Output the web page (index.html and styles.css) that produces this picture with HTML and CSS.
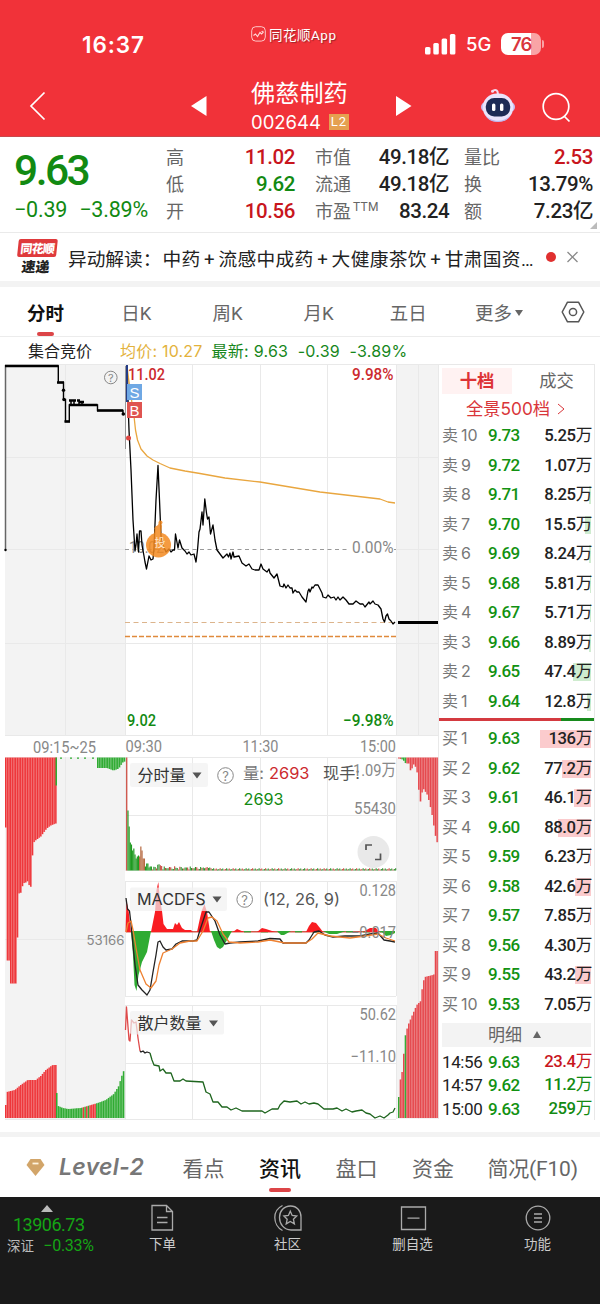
FILE: index.html
```
<!DOCTYPE html>
<html lang="zh-CN">
<head>
  <meta charset="UTF-8" />
  <title>佛慈制药 002644</title>
  <meta name="viewport" content="width=device-width, initial-scale=1.0" />
  <link rel="stylesheet" href="styles.css">
</head>
<body>
  <header class="top">
    <div class="status">
      <div class="time">16:37</div>
      <div class="app">
        <svg width="15" height="16" viewBox="0 0 15 16" fill="none" stroke="#ffd9d9"><rect x=".7" y=".7" width="13.6" height="14.4" rx="4" stroke-width=".9"/><path d="M2.500 9.500l2-1.500 2 2.500 2.500-4 1.500 1.500 2-2M10.500 5.500l2-.3" stroke-width="1.1"/></svg>
        <span>同花顺App</span>
      </div>
      <div class="signal">
        <svg width="31" height="21" viewBox="0 0 31 21" fill="#fff"><rect x="0" y="13" width="5.5" height="7.5" rx="1.5"/><rect x="8.3" y="9" width="5.5" height="11.5" rx="1.5"/><rect x="16.6" y="4.5" width="5.5" height="16" rx="1.5"/><rect x="24.9" y="0" width="5.5" height="20.500" rx="1.5"/></svg>
        <span class="net">5G</span>
        <span class="battery">76</span><i class="cap"></i>
      </div>
    </div>
    <nav class="nav">
      <svg class="back" width="17" height="32" viewBox="0 0 17 32" fill="none" stroke="#fff" stroke-width="1.700"><path d="M15.500 3.500L2 17l13.500 13.500"/></svg>
      <svg class="prev" width="16" height="20" viewBox="0 0 16 20" fill="#fff"><path d="M0 10L15.500 0v20z"/></svg>
      <div class="stock">
        <h1>佛慈制药</h1>
        <div class="code">002644 <b>L2</b></div>
      </div>
      <svg class="next" width="16" height="20" viewBox="0 0 16 20" fill="#fff"><path d="M15.500 10L0 0v20z"/></svg>
      <svg class="robot" width="34" height="36" viewBox="0 0 34 36"><path d="M11.500 3.500c1.500-2 4-2 5 0l.5 3" fill="none" stroke="#f3d9ee" stroke-width="2"/><circle cx="11.500" cy="3.300" r="1.500" fill="#f3d9ee"/><rect x="0" y="14" width="34" height="10" rx="5" fill="#c6c1f4"/><rect x="1.800" y="5.500" width="30.400" height="28" rx="14" fill="#eae4fb"/><path d="M4 26c5 9 21 9 26 0-2 5-6 8-13 8S6 31 4 26z" fill="#bdb5ef"/><rect x="4.800" y="10" width="24.400" height="18.500" rx="8.500" fill="#1d2b55"/><rect x="11" y="15.500" width="3.400" height="7.500" rx="1.600" fill="#fff"/><rect x="19" y="15.500" width="3.400" height="7.500" rx="1.600" fill="#fff"/></svg>
      <svg class="search" width="30" height="32" viewBox="0 0 30 32" fill="none" stroke="#fff" stroke-width="1.700"><circle cx="14" cy="14.500" r="12.800"/><path d="M22.500 24.500l5 5"/></svg>
    </nav>
  </header>

  <section class="quote">
    <div class="price">
      <strong>9.63</strong>
      <div><span>−0.39</span><span>−3.89%</span></div>
    </div>
    <dl>
      <dt>高</dt><dd class="red">11.02</dd>
      <dt>低</dt><dd class="green">9.62</dd>
      <dt>开</dt><dd class="red">10.56</dd>
    </dl>
    <dl>
      <dt>市值</dt><dd>49.18亿</dd>
      <dt>流通</dt><dd>49.18亿</dd>
      <dt>市盈<sup>TTM</sup></dt><dd>83.24</dd>
    </dl>
    <dl>
      <dt>量比</dt><dd class="red">2.53</dd>
      <dt>换</dt><dd>13.79%</dd>
      <dt>额</dt><dd>7.23亿</dd>
    </dl>
  </section>

  <section class="news">
    <div class="news-logo"><b>同花顺</b><i>速递</i></div>
    <p>异动解读：<span>中药<i>+</i>流感中成药<i>+</i>大健康茶饮<i>+</i>甘肃国资…</span></p>
    <i class="dot"></i>
    <svg width="11" height="12" viewBox="0 0 11 12" stroke="#8a8a8a" stroke-width="1.300"><path d="M.5 1l10 10M10.500 1l-10 10"/></svg>
  </section>

  <nav class="periods">
    <a class="on">分时</a><a>日K</a><a>周K</a><a>月K</a><a>五日</a><a class="more">更多<i></i></a>
    <svg width="24" height="22" viewBox="0 0 24 22" fill="none" stroke="#555" stroke-width="1.500"><path d="M6.500 1.200h11L22.800 11l-5.300 9.800h-11L1.200 11z" stroke-linejoin="round"/><circle cx="12" cy="11" r="3.600"/></svg>
  </nav>

  <div class="legend">
    <span>集合竞价</span>
    <span class="avg">均价: 10.27</span>
    <span class="last">最新: 9.63&nbsp; -0.39&nbsp; -3.89%</span>
  </div>

  <main class="board">
    <svg class="chart" width="439" height="756" viewBox="0 364 439 756">
      <!-- auction panels -->
      <g fill="#f3f3f3">
        <rect x="5" y="364" width="120" height="371.500"/><rect x="397" y="364" width="42" height="371.500"/>
        <rect x="5" y="757" width="120" height="362"/><rect x="397" y="757" width="42" height="362"/>
      </g>
      <path class="grid" d="M5 364.500H439M5 457.500H439M5 549.500H125M396 549.500H439M5 643.500H439M5 735.500H439M125.500 364V735M192.500 364V735M260.500 364V735M327.500 364V735M396.500 364V735M65.500 364V735M418.500 364V735M438.500 364V1119"/>
      <path class="grid" d="M125 757.500H396M125 815.500H396M125 870.500H396M125 881.500H396M125 996.500H396M125 1005.500H396M125 1063.500H396M125 1119.500H396M5 939.500H125M397 939.500H439M5 1119.500H125M65.500 757V1119M418.500 757V1119M125.500 757V870M192.500 757V870M260.500 757V870M327.500 757V870M396.500 757V870M125.500 881V996M192.500 881V996M260.500 881V996M327.500 881V996M396.500 881V996M125.500 1005V1119M192.500 1005V1119M260.500 1005V1119M327.500 1005V1119M396.500 1005V1119"/>

      <!-- call auction price -->
      <path d="M5.500 365V550" stroke="#666" stroke-width="1.500"/><circle cx="5.500" cy="550" r="1.200"/>
      <path d="M5 366H58.300V382.500H63.500V399.500H65.500V421.500H69.300V405H97.500V410.500H123V414" fill="none" stroke="#000" stroke-width="1.400"/>
      <path d="M5 366H58.500M57 382.500H64M64.500 421.500H70M69 405H97.500M97 410.500H123M69 400.500H76M77 400.500H80M79 402H84" stroke="#000" stroke-width="2.500"/>
      <path d="M71 401v4M74 401v4M79 401v4M82 402v3" stroke="#000" stroke-width="1.500"/>
      <circle cx="63.500" cy="390.300" r="1.700"/><circle cx="64" cy="399.500" r="1.700"/><circle cx="123.300" cy="414" r="1.800"/>

      <!-- reference lines -->
      <path d="M125 549.500H350M394 549.500H396" stroke="#999" stroke-dasharray="4 3.500"/>
      <path d="M125 622.500H396" stroke="#dcb48c" stroke-dasharray="5 3.500"/>
      <path d="M125 636.500H396" stroke="#e08a3c" stroke-width="1.500" stroke-dasharray="5 2"/>
      <text x="129" y="553" textLength="35" class="num gray">10.02</text>

      <!-- intraday -->
      <path d="M125.500 366V449" stroke="#999"/>
      <polyline class="line" stroke="#e9a63f" points="127,366 130,390 134,416 135.500,430 137.500,440 141,449 147,456 153,460 160,463.500 170,468 185,471 200,473.500 225,478 260,482 290,487 320,492 350,495.500 380,499 388,502 395,503"/>
      <polyline class="line" stroke="#000" stroke-width="1.350" points="127,365 128,400 129,430 131,470 133,520 135,551 136,545 137,534 138.500,552 139.500,531 141,531 142,545 144,556 145,562 146.500,569 149,556 151,560 153,559 154,548 156,500 158,465.500 159.500,500 161,536 163,545 166,552 169,549 171,552 173,550 174.500,550 175.500,534 178,548 179.500,540 182,548 185,551 187,554 189,552 191,555 194,554 196,562 197.500,550 199,532 200,529 202,512 203,525 204.800,499 206.500,513 207.500,519 209,517 210.500,534 213,525 215,540 217,550 220,554 223,558 227,554 228.500,557 230,553 231,559 233,552 234,557 239,556 242,563 246,566 249,564 252,569 255,570 259,570 261,564 263,569 267,572 269,569 270,573 274,578 277,574 280,586 283,587 284,584 286,588 288,585 290,588 292,588 293,593 295,590 297,592 299,592 302,597 306,602 308,591 309,589 310,592 312,587 313,588 315,585 318,585 320,589 322,593 323,597 326,598 328,595 331,598 334,597 336,600 338,597 340,600 343,597 346,600 349,604 353,604 356,601 360,604 363,604 365,607 369,602 370,604 373,601 375,604 378,605 381,609 383,619 384.500,622 386,616 387.500,614 389,619 391,621 393,624 395,622"/>
      <path d="M127 365V402" stroke="#243c86" stroke-width="2"/>
      <path d="M398 622.500H438" stroke="#000" stroke-width="3"/>
      <circle cx="128.500" cy="438" r="2.500" fill="#df4440"/>
      <rect x="127" y="384" width="15" height="16" fill="#6fa8e4"/><rect x="127" y="402" width="15" height="16" fill="#df5450"/>
      <text x="134.500" y="397.500" class="badge">S</text><text x="134.500" y="415.500" class="badge">B</text>
      <g opacity=".85" fill="#f48a20"><circle cx="158.500" cy="545" r="12.500"/><path d="M154 534l1-7 3-2 2-5 2 6-1 8z"/><circle cx="160.500" cy="522.500" r="2"/><circle cx="156.500" cy="528.500" r="2"/></g>
      <text x="160" y="547" class="coin">投</text>

      <text x="128" y="380" textLength="37" class="num red">11.02</text>
      <text x="352" y="380" textLength="41.500" class="num red">9.98%</text>
      <text x="352" y="553" textLength="41.500" class="num gray">0.00%</text>
      <text x="127" y="725.500" textLength="29" class="num green">9.02</text>
      <text x="343" y="725.500" textLength="50.500" class="num green">−9.98%</text>
      <g class="help"><circle cx="110.800" cy="377.500" r="6.300"/><text x="110.800" y="381.500" class="mini">?</text></g>
      <text x="33" y="752.500" textLength="63" class="num gray">09:15~25</text>
      <text x="125.500" y="751.500" textLength="36.500" class="num gray">09:30</text>
      <text x="242.500" y="751.500" textLength="36" class="num gray">11:30</text>
      <text x="360" y="751.500" textLength="36" class="num gray">15:00</text>

      <!-- bars are filled in by script.js -->
      <g id="bars"></g>

      <!-- MACD lines -->
      <polyline class="line" stroke="#222" points="126,898 127.500,909 129.500,911 131,924 133,945 135,965 138,985 142,990 147,995 150,990 153,972 156,955 158,942 160,941 163,947 166,950 172,949 176,944 182,941 193,941 197,940 200,930 204,918 206,912 209,912 215,921 220,935 225,944 230,943 240,942 258,941 270,938.500 280,939 283,943 306,943 309,940 314,932 319,931 325,935 333,937 345,936 360,936 370,934 378,933 384,940 390,941 395,942"/>
      <polyline class="line" stroke="#ee8030" points="126,932 128,923 131,921 133,930 136,948 140,970 146,984 151,988 156,981 159,965 163,953 172,949 180,943 190,941 197,941 203,931 208,918 212,917 217,921 223,934 229,942 240,943 258,942 270,940 285,943 306,943 312,939 318,933 330,936 350,938 365,936 378,934 386,938 395,941"/>

      <!-- retail count -->
      <polyline class="line" stroke="#df4a4a" points="125.500,1030 126.500,1007 129,1040 130,1041 131.500,1020 134,1023 136,1022 138,1038 140,1051"/>
      <polyline class="line" stroke="#222" points="140,1051 141,1052 143,1051 145,1053 147,1052 150,1053"/>
      <polyline class="line" stroke="#1e651e" points="150,1053 152,1060 154,1065 159,1066 160,1071 163,1069 166,1073 171,1073 174,1081 180,1081 183,1079 186,1081 203,1082 206,1092 210,1094 213,1102 218,1102 222,1107 227,1107 231,1110 236,1108 242,1111 262,1111 265,1113 272,1109 278,1109 280,1105 284,1101 290,1102 297,1101 301,1104 305,1102 309,1104 314,1103 318,1104 324,1109 333,1109 337,1108 342,1111 346,1109 352,1112 356,1111 362,1110 366,1113 370,1114 375,1118 380,1116 384,1118 388,1115 390,1113 393,1112 395,1108"/>

      <g fill="#f1f1f1" fill-opacity=".7"><rect x="130" y="763" width="78" height="24" rx="2"/><rect x="130" y="887.500" width="97" height="23.500" rx="2"/><rect x="130" y="1011" width="94" height="23.500" rx="2"/></g>
      <text x="137.500" y="781" textLength="48" class="label">分时量</text>
      <text x="137" y="905" textLength="68.500" class="label">MACDFS</text>
      <text x="137.500" y="1029" textLength="64" class="label">散户数量</text>
      <path d="M192.500 772.500h9l-4.500 6zM212.500 896.500h9l-4.500 6zM209 1020.500h9l-4.500 6z" fill="#555"/>
      <g class="help"><circle cx="225.500" cy="775.500" r="7.800"/><text x="225.500" y="780.500">?</text><circle cx="244.700" cy="899.500" r="7.800"/><text x="244.700" y="904.500">?</text></g>
      <text x="243" y="779" textLength="21" class="label gray">量:</text><text x="269" y="779" textLength="40.500" class="wide red">2693</text>
      <text x="323" y="779" textLength="37" class="label mid">现手:</text>
      <text x="353" y="776" textLength="43" class="num gray">1.09万</text>
      <text x="243.500" y="804.500" textLength="40" class="wide green">2693</text>
      <text x="354" y="814" textLength="42" class="num gray">55430</text>
      <text x="263" y="905" textLength="77" class="wide">(12, 26, 9)</text>
      <text x="359.500" y="895.500" textLength="36.500" class="num gray">0.128</text>
      <text x="351" y="937.500" textLength="45" class="num gray">−0.017</text>
      <text x="86.500" y="945" textLength="38" class="small">53166</text>
      <text x="359.500" y="1019.500" textLength="36.500" class="num gray">50.62</text>
      <text x="350.500" y="1062" textLength="45.500" class="num gray">−11.10</text>
      <circle cx="373.500" cy="852" r="16" fill="#e9e9e9"/>
      <path d="M366 850v-5h6M375 859.500h5.500v-6" fill="none" stroke="#555" stroke-width="1.700"/>
    </svg>

    <aside class="book">
      <div class="book-tabs"><b>十档</b><span>成交</span></div>
      <div class="depth">全景500档 <svg width="8" height="12" viewBox="0 0 8 12" fill="none" stroke="#d9363a"><path d="M1 1l6 5-6 5"/></svg></div>
      <div class="rows" id="sell"></div>
      <div class="ratio"></div>
      <div class="rows" id="buy"></div>
      <div class="detail">明细 <i></i></div>
      <div class="ticks">
        <div><span>14:56</span><em>9.63</em><b class="red">23.4<s>万</s></b></div>
        <div><span>14:57</span><em>9.62</em><b class="green">11.2<s>万</s></b></div>
        <div><span>15:00</span><em>9.63</em><b class="green">259<s>万</s></b></div>
      </div>
    </aside>
  </main>

  <nav class="tabs">
    <svg width="19" height="19" viewBox="0 0 19 19"><path d="M4.500 1h10L18.500 7 9.500 18 .5 7z" fill="#d2a569"/><path d="M6.500 5.500h6" stroke="#fff4df" stroke-width="1.800"/></svg>
    <span class="level">Level-2</span><a>看点</a><a class="on">资讯</a><a>盘口</a><a>资金</a><a class="f10">简况(F10)</a>
  </nav>

  <footer class="bottom">
    <div class="index">
      <i></i>
      <strong>13906.73</strong>
      <div>深证 <span>−0.33%</span></div>
    </div>
    <a><svg width="28" height="30" viewBox="0 0 28 30"><path d="M3 2.500h14.500l6 6V27H3zM17.500 2.500v6h6M8 14.500h10.500M8 19.500h10.500"/></svg>下单</a>
    <a><svg width="28" height="30" viewBox="0 0 28 30"><path d="M5.500 14.500c0-6.500 4.500-11.500 11-11.500s10.500 5 10.500 11V27H17c-7 0-11.500-6-11.500-12.500zM8.500 2.500C3.500 5 .8 9.500 .8 14.500S3.500 25 8.500 27.500M16.300 8.200l1.900 4.300 4.500.5-3.300 3.200 1 4.700-4.100-2.400-4.100 2.400 1-4.700-3.300-3.200 4.500-.5z"/></svg>社区</a>
    <a><svg width="28" height="30" viewBox="0 0 28 30"><path d="M2.500 4h24v22.500h-24zM8.500 15.200h12"/></svg>删自选</a>
    <a><svg width="28" height="30" viewBox="0 0 28 30"><circle cx="14" cy="15" r="11.800"/><path d="M10 11h8M10 15h8M10 19h8"/></svg>功能</a>
  </footer>
  <script src="script.js"></script>
</body>
</html>
```
FILE: styles.css
```
* {
  box-sizing: border-box;
}

body {
  margin: 0;
  width: 600px;
  height: 1304px;
  overflow: hidden;
  background: #fff;
  color: #222;
  font-family: Roboto, "Noto Sans CJK SC", sans-serif;
}

i, em {
  font-style: normal;
}

s, u {
  text-decoration: none;
}

.red { color: #c8161d; fill: #cc2a2e; }
.green { color: #128a12; fill: #128a12; }

/* header */
.top {
  height: 137px;
  background: #f13239;
  color: #fff;
  border-bottom: 1px solid #c8484c;
}

.status {
  height: 68px;
  display: grid;
  grid-template-columns: 251px 174px 1fr;
}

.time {
  padding: 31px 0 0 82px;
  font: 600 22.500px/28px Inter, sans-serif;
  letter-spacing: 0.9px;
}

.app {
  display: flex;
  align-items: center;
  height: 20px;
  margin-top: 24px;
  gap: 3px;
  font-size: 13.500px;
  letter-spacing: 0.500px;
  text-shadow: 1px 1px 1px #9c2428;
}

.signal {
  display: flex;
  align-items: center;
  height: 24px;
  margin-top: 32px;
}

.net {
  margin: 0 10px 0 10px;
  font: 500 18.500px/24px Inter, sans-serif;
}

.battery {
  width: 40px;
  height: 22px;
  border-radius: 7px;
  background: linear-gradient(90deg, #fff 76%, #f9a4a6 76%);
  color: #d9363c;
  font: 600 18.500px/22px Inter, sans-serif;
  text-align: center;
  letter-spacing: -0.800px;
}

.cap {
  width: 2px;
  height: 8px;
  margin-left: 1px;
  border-radius: 0 2px 2px 0;
  background: #f9a4a6;
}

.nav {
  display: flex;
  height: 68px;
}

.back { margin: 21px 0 0 29px; }
.prev { margin: 28px 0 0 145px; }
.stock { width: 98px; margin-left: 44px; }
.next { margin: 28px 0 0 47px; }
.robot { margin: 20px 0 0 68.500px; }
.search { margin: 24px 0 0 27px; }

.stock h1 {
  margin: 9px 0 0;
  font: 400 24.200px/30px "Noto Sans CJK SC", sans-serif;
  white-space: nowrap;
}

.code {
  display: flex;
  align-items: center;
  margin-top: 3px;
  font: 400 18.500px/24px Inter, sans-serif;
  white-space: nowrap;
}

.code b {
  margin-left: 8px;
  width: 22px;
  background: #e5a050;
  font: 400 13px/16px Roboto, sans-serif;
  letter-spacing: 1px;
  text-align: center;
}

/* quote */
.quote {
  position: relative;
  display: flex;
  height: 96px;
  padding: 7px 7px 0 14px;
  border-bottom: 1px solid #eaeaea;
}

.quote::after {
  content: "";
  position: absolute;
  right: 3px;
  bottom: 3px;
  border: 0 solid transparent;
  border-left-width: 7px;
  border-bottom: 7px solid #bbb;
}

.price {
  flex: none;
  width: 152px;
  color: #128a12;
  white-space: nowrap;
}

.price strong {
  display: block;
  font-weight: 500;
  font-size: 42.500px;
  line-height: 54px;
  letter-spacing: -2.500px;
}

.price div {
  display: flex;
  justify-content: space-between;
  width: 134px;
  font-size: 21.500px;
  line-height: 24px;
  letter-spacing: -0.200px;
}

.quote dl {
  flex: none;
  display: grid;
  grid-template-columns: auto 1fr;
  grid-auto-rows: 27px;
  width: 129px;
  margin: 0 20px 0 0;
  font-size: 18px;
  line-height: 27px;
  white-space: nowrap;
}
.quote dl:nth-of-type(2) { padding-right: 6px; }

.quote dt { color: #666; }
.quote dd {
  margin: 0;
  font-weight: 500;
  font-size: 20.500px;
  letter-spacing: -0.400px;
  text-align: right;
}
.quote sup {
  font-size: 12px;
  letter-spacing: 0.300px;
  line-height: 1;
  margin-left: 2px;
}

/* news */
.news {
  display: flex;
  align-items: center;
  height: 54px;
  padding-left: 16px;
  border-bottom: 6px solid #f3f3f3;
}

.news-logo {
  width: 41px;
  display: flex;
  flex-direction: column;
  align-items: center;
  font-family: "Noto Sans CJK SC", sans-serif;
  font-weight: 900;
  transform: skewX(-6deg);
}

.news-logo b {
  width: 39px;
  height: 18px;
  border-radius: 2px;
  background: #df3a3c;
  color: #fff;
  font-size: 12px;
  line-height: 18px;
  text-align: center;
  letter-spacing: -0.800px;
}

.news-logo i {
  font-size: 14px;
  line-height: 18px;
}

.news p {
  margin: 0 0 0 11px;
  width: 472px;
  font-size: 18.700px;
  white-space: nowrap;
}

.news p span { margin-left: 1px; letter-spacing: 0.350px; }
.news p i { padding: 0 3.500px; }

.dot {
  width: 10px;
  height: 10px;
  border-radius: 50%;
  background: #e0302f;
  margin: 0 11px 0 6px;
}

/* period tabs */
.periods {
  display: flex;
  align-items: center;
  height: 50px;
  padding-left: 27px;
  border-bottom: 1px solid #ececec;
  font-size: 18.500px;
  color: #666;
}

.periods a { width: 91.200px; position: relative; white-space: nowrap; padding-left: 3px; }
.periods a.on { color: #111; font-weight: 600; padding-left: 0; }
.periods a:nth-child(5) { padding-left: 0; margin-left: -2px; }
.periods a.more { width: 86px; padding-left: 0; margin-left: -6px; }
.more i {
  display: inline-block;
  margin: 0 0 4px 3px;
  border: 5px solid transparent;
  border-width: 6px 4.500px 0;
  border-top-color: #666;
}

.on::after {
  content: "";
  position: absolute;
  left: 10px;
  bottom: -11px;
  width: 17px;
  height: 4px;
  border-radius: 2px;
  background: #dc4548;
}

.legend {
  display: flex;
  height: 27px;
  padding: 1px 0 0 28px;
  font: 400 16px/27px Inter, "Noto Sans CJK SC", sans-serif;
  white-space: nowrap;
}
.avg { margin-left: 28px; color: #e3b23c; letter-spacing: 0.200px; }
.last { margin-left: 9px; color: #17871c; letter-spacing: 0.250px; }

/* charts */
.board {
  display: flex;
  height: 756px;
}

.chart { flex: none; }
.grid { stroke: #e9e9e9; fill: none; }
.line { fill: none; stroke-width: 1.300; stroke-linejoin: round; }
.num { font: 500 16.500px Roboto, "Noto Sans CJK SC", sans-serif; }
.gray { fill: #888; font-weight: 400; }
.wide { font: 400 16px Inter, sans-serif; }
text.wide:not(.red):not(.green) { fill: #555; }
.label { font: 400 16px Inter, "Noto Sans CJK SC", sans-serif; fill: #333; }
.label.gray { fill: #777; }
.label.mid { fill: #555; }
.small { font: 400 13px Inter, sans-serif; fill: #888; }
.badge { font: 400 15px "Liberation Sans", sans-serif; fill: #fff; text-anchor: middle; }
.coin { font: 11px "Noto Sans CJK SC", sans-serif; fill: #ffe6c8; text-anchor: middle; }
.help circle { fill: none; stroke: #888; }
.help text { font-family: Inter, sans-serif; font-size: 13px; fill: #888; text-anchor: middle; }
.help .mini { font-size: 11px; }

/* order book */
.book {
  width: 156px;
  border-right: 1px solid #e8e8e8;
  border-top: 1px solid #e8e8e8;
}

.book-tabs {
  display: grid;
  grid-template-columns: 70px 1fr;
  height: 29px;
  padding: 3px 3px 0;
  font-size: 17.300px;
  line-height: 26px;
  text-align: center;
  color: #666;
}
.book-tabs b { background: #fff2f2; color: #dd3336; font-weight: 600; }
.book-tabs span { padding-left: 10px; }

.depth {
  height: 27px;
  padding-left: 27px;
  color: #d9363a;
  font: 400 17.300px/30px Inter, "Noto Sans CJK SC", sans-serif;
}
.depth svg { margin-left: 2px; }

.row, .ticks div {
  position: relative;
  display: grid;
  grid-template-columns: 46px 44px 1fr;
  height: 29.500px;
  line-height: 29.500px;
  padding: 0 2px 0 3px;
  white-space: nowrap;
}
.row span { color: #777; font-family: Inter, "Noto Sans CJK SC", sans-serif; font-size: 16px; letter-spacing: -0.200px; word-spacing: -1px; }
.row em, .ticks em { color: #129212; font-size: 17px; font-weight: 500; letter-spacing: -0.500px; }
.row b, .ticks b { position: relative; font-size: 16.700px; font-weight: 500; text-align: right; letter-spacing: -0.400px; }
.row s, .ticks s { font-weight: 400; }
.row u {
  position: absolute;
  right: 3px;
  top: 6px;
  height: 18px;
}
#sell u { background: #cfeccf; }
#buy u { background: #fbcbcd; }
#sell { height: 296.500px; }
#buy { height: 295px; }

.ratio {
  height: 3px;
  margin: 0 0 3.500px;
  background: linear-gradient(90deg, #d43a40 79%, #178a1c 79%);
}

.detail {
  height: 24px;
  margin: 4px 3px 3px;
  background: #f3f3f3;
  color: #666;
  font-size: 17px;
  line-height: 24px;
  padding-left: 46px;
}
.detail i {
  display: inline-block;
  margin: 0 0 3px 7px;
  border: solid transparent;
  border-width: 0 4.500px 7px;
  border-bottom-color: #666;
}
.ticks div { height: 23.300px; line-height: 24px; }
.ticks span { font-size: 17px; letter-spacing: -0.400px; }

/* content tabs */
.tabs {
  display: flex;
  align-items: center;
  height: 77px;
  padding: 17px 0 0 26px;
  background: linear-gradient(#fff 12px, #f3f3f3 12px, #f3f3f3 17px, #fff 17px);
  font-size: 21px;
  color: #666;
  white-space: nowrap;
}
.tabs a { position: relative; width: 76.500px; }
.tabs a.on { color: #111; font-weight: 500; }
.tabs a.on::after { width: 22px; left: 10px; bottom: -10px; }
.tabs a.f10 { width: auto; letter-spacing: -0.200px; margin-left: -1px; }
.level {
  width: 123.500px;
  margin-left: 14px;
  font: italic 600 23px Inter, sans-serif;
  letter-spacing: 0.300px;
  color: #777;
}

/* bottom bar */
.bottom {
  display: flex;
  height: 107px;
  background: #1a1a1a;
  color: #ccc;
  font-size: 13.500px;
}
.bottom a {
  display: flex;
  flex-direction: column;
  align-items: center;
  width: 125px;
  padding-top: 6px;
  line-height: 20px;
}
.bottom a svg { fill: none; stroke: #aaa; stroke-width: 1.300; margin-bottom: 1px; }
.index { width: 100px; padding-left: 7px; white-space: nowrap; color: #bbb; }
.index i {
  display: block;
  width: 0;
  margin: 8px 0 0 34px;
  border: solid transparent;
  border-width: 0 6px 7px;
  border-bottom-color: #bbb;
}
.index strong {
  display: block;
  padding: 3px 0 0 6px;
  color: #15a515;
  font-weight: 400;
  font-size: 18px;
  line-height: 20px;
  letter-spacing: -0.500px;
}
.index span { color: #15a515; font-size: 16px; margin-left: 6px; letter-spacing: -0.300px; }
.index div { line-height: 22px; }
```
FILE: script.js
```
const RED = '#ee3438';
const GREEN = '#2fab32';
const bars = document.getElementById('bars');

// squeeze the digits instead of the gaps between them
document.querySelectorAll('.chart text[textLength]').forEach(t => t.setAttribute('lengthAdjust', 'spacingAndGlyphs'));

function shape(points, color) {
  const p = document.createElementNS('http://www.w3.org/2000/svg', 'polygon');
  p.setAttribute('points', points);
  p.setAttribute('fill', color);
  bars.appendChild(p);
}

function rect(x, y, w, h, color) {
  shape(`${x},${y} ${x + w},${y} ${x + w},${y + h} ${x},${y + h}`, color);
}

// height at x, interpolated between [x, height] stops
function at(stops, x) {
  for (let i = 1; i < stops.length; i++) {
    const [x0, h0] = stops[i - 1];
    const [x1, h1] = stops[i];
    if (x <= x1) return h0 + (h1 - h0) * (x - x0) / (x1 - x0);
  }
  return stops[stops.length - 1][1];
}

function series(from, to, base, dir, stops, color) {
  for (let x = from; x < to; x += 1.67) {
    const h = at(stops, x);
    const c = typeof color === 'function' ? color(x) : color;
    const y = dir < 0 ? base - h : base;
    rect(x, y, 1.67, h, c);
    rect(x + 1.25, y, 0.42, h, 'rgba(255,255,255,.4)');
  }
}

// auction volume, left
series(5, 55.5, 757.5, 1, [[5, 70], [6, 203], [8.5, 203], [9, 226], [15.5, 226], [16, 180], [17.5, 180], [18, 136], [21, 135], [22, 126], [25, 125], [26, 122], [28, 127], [30, 130], [31, 113], [32, 92], [33.5, 84], [40, 79], [46, 71], [50, 68], [55, 66]], RED);
rect(55.5, 757.5, 1.5, 28, GREEN);
[60, 70, 77, 84, 92].forEach(x => rect(x, 757.5, 2, 1.3, GREEN));
series(97, 124, 757.5, 1, [[97, 10.5], [106, 10.5], [113, 13], [118, 11], [122, 5], [124, 4]], GREEN);
series(5, 55.5, 1118, -1, [[5, 13], [6, 26], [14, 28], [20, 33], [27, 38], [35, 38], [40, 42], [45, 48], [52, 53], [55, 53]], RED);
series(56, 124, 1118, -1, [[56, 25], [57.5, 12], [62, 10], [68, 9], [80, 10], [97, 15], [105, 18], [113, 24], [118, 32], [121, 42], [124, 50]],
  x => (x > 80 && x < 96 && Math.floor(x) % 3) ? RED : GREEN);

// auction volume, right
series(398, 438, 757.5, 1, [[398, 1], [402, 2], [405, 6], [408, 6], [410, 14], [413, 7], [416, 11], [418, 32], [420, 46], [422, 30], [427, 38], [431, 55], [435, 80], [438, 90]],
  x => (x > 401 && x < 405) ? GREEN : '#e5474c');
series(398, 438, 1118, -1, [[398, 21], [400, 42], [402, 48], [404, 80], [407, 92], [412, 104], [416, 113], [420, 117], [422, 134], [424, 141], [432, 143], [434, 144], [434.5, 167], [438, 167]],
  x => (x < 399 || (x > 404 && x < 405.5)) ? GREEN : '#e5474c');

// minute volume
const vol = [60, 44, 28, 26, 20, 22, 16, 12, 14, 15, 14, 24, 20, 12, 12, 4, 7, 7, 3, 4, 4];
rect(126, 757.5, 1.4, 113, '#cf5a50');
vol.forEach((h, i) => rect(127.4 + i * 1.17, 870.5 - h, 1.17, h, i > 9 && i < 15 ? '#b4643a' : '#1e9a20'));
for (let x = 152, i = 0; x < 396; x += 1.3, i++) {
  let h = 1 + (i * 7 % 5) * 0.3;
  if (x < 200) h += (i * 3 % 4) * 0.7;
  if (x > 157 && x < 162) h += 4 - (x - 157) * 0.6;
  if (x > 199 && x < 211) h += 1.2;
  rect(x, 870.5 - h, 1.1, h, i * 5 % 7 < 3 ? '#c9473c' : '#2b8f2b');
}

// MACD histogram
const zero = 931.7;
const macd = [
  [RED, '125.5,932 126.5,901 128.5,910 131,932'],
  [GREEN, '131,931 133,955 134.5,985 136.5,991 138.5,975 142,962 147,952 151,931'],
  [RED, '151,932 153,922 155,912 156.5,890 158.3,882 160,900 162,911 163.5,924 167,929 173,929 175,923 177,925 179,922 182,928 185,930 191,930 193,932'],
  [RED, '197,932 200,918 202,910 204.5,904 207,912 210,932'],
  [GREEN, '211,931 214,940 217,947 220,949 223,947 227,940 232,931'],
  [RED, '233,932 237,929 244,932'],
  [RED, '257,932 262,928 266,929 275,932'],
  [GREEN, '277,931 281,935 284,935 291,931'],
  [RED, '306,932 309,926 312,922 316,923 320,928 323,932'],
  [GREEN, '323,931 329,934 337,934 346,931'],
  [RED, '363,932 370,928 376,928 379,932'],
  [GREEN, '381,931 386,936 391,935 395,933 395,931'],
];
rect(126, zero - 0.7, 269, 1.4, '#d3594a');
for (let x = 244; x < 390; x += 17) rect(x, zero - 0.7, 7, 1.4, '#3da53d');
macd.forEach(([c, p]) => shape(p, c === RED ? '#f91d22' : c));

// order book
const sell = [
  [10, '9.73', '5.25', 0], [9, '9.72', '1.07', 0], [8, '9.71', '8.25', 2], [7, '9.70', '15.5', 6], [6, '9.69', '8.24', 2],
  [5, '9.68', '5.81', 1], [4, '9.67', '5.71', 1], [3, '9.66', '8.89', 2], [2, '9.65', '47.4', 18], [1, '9.64', '12.8', 4],
];
const buy = [
  [1, '9.63', '136', 51], [2, '9.62', '77.2', 29], [3, '9.61', '46.1', 17], [4, '9.60', '88.0', 33], [5, '9.59', '6.23', 1],
  [6, '9.58', '42.6', 16], [7, '9.57', '7.85', 1], [8, '9.56', '4.30', 0], [9, '9.55', '43.2', 16], [10, '9.53', '7.05', 0],
];
function fill(id, side, list) {
  document.getElementById(id).innerHTML = list.map(([n, p, v, w]) =>
    `<div class="row"><u style="width:${w}px"></u><span>${side} ${n}</span><em>${p}</em><b>${v}<s>万</s></b></div>`).join('');
}
fill('sell', '卖', sell);
fill('buy', '买', buy);
```
